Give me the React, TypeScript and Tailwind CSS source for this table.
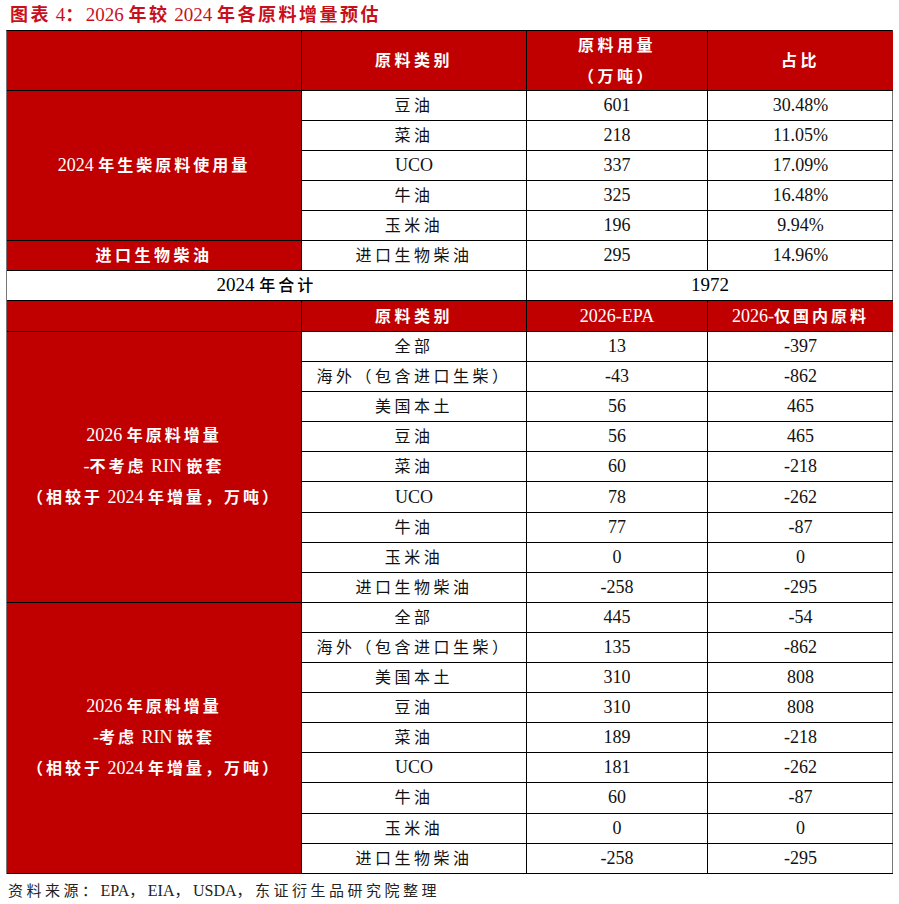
import React from 'react';

const RED = 'bg-[#c00000]';

type Row = [string, string, string];

const usage: Row[] = [
  ['豆油', '601', '30.48%'],
  ['菜油', '218', '11.05%'],
  ['UCO', '337', '17.09%'],
  ['牛油', '325', '16.48%'],
  ['玉米油', '196', '9.94%'],
];

const noRin: Row[] = [
  ['全部', '13', '-397'],
  ['海外（包含进口生柴）', '-43', '-862'],
  ['美国本土', '56', '465'],
  ['豆油', '56', '465'],
  ['菜油', '60', '-218'],
  ['UCO', '78', '-262'],
  ['牛油', '77', '-87'],
  ['玉米油', '0', '0'],
  ['进口生物柴油', '-258', '-295'],
];

const withRin: Row[] = [
  ['全部', '445', '-54'],
  ['海外（包含进口生柴）', '135', '-862'],
  ['美国本土', '310', '808'],
  ['豆油', '310', '808'],
  ['菜油', '189', '-218'],
  ['UCO', '181', '-262'],
  ['牛油', '60', '-87'],
  ['玉米油', '0', '0'],
  ['进口生物柴油', '-258', '-295'],
];

const CJK = /([\u3000-\u9fff\uff00-\uffef]+)/;

// CJK runs get letter spacing, latin/digits stay tight
function T({ s, cjk = 'tracking-[3.5px] text-[16px]' }: { s: string; cjk?: string }) {
  const parts = s.split(CJK).filter(Boolean);
  return (
    <span>
      {parts.map((p, i) =>
        CJK.test(p) ? (
          <span key={i} className={cjk}>
            {p}
          </span>
        ) : (
          <span key={i}>{p}</span>
        )
      )}
    </span>
  );
}

function Cell({
  children,
  className = '',
  last = false,
}: {
  children?: React.ReactNode;
  className?: string;
  last?: boolean;
}) {
  return (
    <div
      className={`flex items-center justify-center text-center border-b border-black ${
        last ? '' : 'border-r'
      } ${className}`}
    >
      {children}
    </div>
  );
}

function DataRow({ row }: { row: Row }) {
  const [name, a, b] = row;
  return (
    <>
      <Cell className="col-start-2">
        <T s={name} />
      </Cell>
      <Cell>{a}</Cell>
      <Cell last>{b}</Cell>
    </>
  );
}

const headCjk = 'tracking-[3.5px] text-[16px] font-semibold';

function GroupLabel({ lines, span }: { lines: string[]; span: string }) {
  return (
    <Cell className={`${RED} ${span} flex-col text-white leading-[30px]`}>
      {lines.map((l) => (
        <T key={l} s={l} cjk="tracking-[3px] text-[16px] font-semibold" />
      ))}
    </Cell>
  );
}

export default function App() {
  return (
    <div
      className="w-[899px] h-[904px] bg-white text-[#111] text-[18px] pt-[3px]"
      style={{ fontFamily: '"Liberation Serif", "Noto Sans CJK SC", serif' }}
    >
      <h1 className="pl-[10px] h-[27px] text-[19px] leading-[24px] font-normal text-[#c8101c]">
        <T s="图表 4：2026 年较 2024 年各原料增量预估" cjk="tracking-[2.5px] text-[18px] font-semibold" />
      </h1>

      <div className="ml-[6px] w-[887px] border-t border-black border-l border-l-[#777] border-r border-r-[#777]">
        <div className="grid grid-cols-[295px_225px_181px_185px] grid-rows-[60px_repeat(7,30px)_31px_repeat(18,30.1px)]">
          {/* header 1 */}
          <Cell className={RED} />
          <Cell className={`${RED} text-white`}>
            <T s="原料类别" cjk={headCjk} />
          </Cell>
          <Cell className={`${RED} text-white flex-col leading-[30px]`}>
            <T s="原料用量" cjk={headCjk} />
            <T s="（万吨）" cjk={headCjk} />
          </Cell>
          <Cell last className={`${RED} text-white`}>
            <T s="占比" cjk={headCjk} />
          </Cell>

          {/* usage */}
          <GroupLabel lines={['2024 年生柴原料使用量']} span="row-span-5" />
          {usage.map((r) => (
            <DataRow key={r[0]} row={r} />
          ))}

          <Cell className={`${RED} text-white`}>
            <T s="进口生物柴油" cjk={headCjk} />
          </Cell>
          <Cell>
            <T s="进口生物柴油" />
          </Cell>
          <Cell>295</Cell>
          <Cell last>14.96%</Cell>

          {/* total */}
          <Cell className="col-span-2 text-black text-[19px]">
            <T s="2024 年合计" cjk="tracking-[3px] text-[16px] font-medium" />
          </Cell>
          <Cell last className="col-span-2 text-black text-[19px]">
            1972
          </Cell>

          {/* header 2 */}
          <Cell className={RED} />
          <Cell className={`${RED} text-white`}>
            <T s="原料类别" cjk={headCjk} />
          </Cell>
          <Cell className={`${RED} text-white`}>2026-EPA</Cell>
          <Cell last className={`${RED} text-white`}>
            <T s="2026-仅国内原料" cjk="tracking-[3px] text-[16px] font-semibold" />
          </Cell>

          {/* 2026 without RIN */}
          <GroupLabel
            lines={['2026 年原料增量', '-不考虑 RIN 嵌套', '（相较于 2024 年增量，万吨）']}
            span="row-span-9 col-start-1 row-start-10"
          />
          {noRin.map((r, i) => (
            <DataRow key={'n' + i} row={r} />
          ))}

          {/* 2026 with RIN */}
          <GroupLabel
            lines={['2026 年原料增量', '-考虑 RIN 嵌套', '（相较于 2024 年增量，万吨）']}
            span="row-span-9 col-start-1 row-start-19"
          />
          {withRin.map((r, i) => (
            <DataRow key={'w' + i} row={r} />
          ))}
        </div>
      </div>

      <p className="pl-[8px] pt-[5px] text-[16px] text-[#222]">
        <T s="资料来源：EPA，EIA，USDA，东证衍生品研究院整理" cjk="tracking-[3.5px] text-[15px]" />
      </p>
    </div>
  );
}
